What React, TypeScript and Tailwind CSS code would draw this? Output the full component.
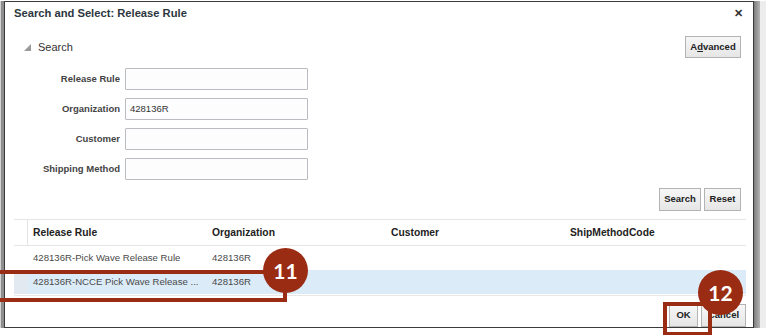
import React from "react";

const F = { fontFamily: '"Liberation Sans", Arial, sans-serif' };

function Btn({ children, className = "" }: { children: React.ReactNode; className?: string }) {
  return (
    <div
      className={
        "flex items-center justify-center border border-[#b3b3b3] bg-gradient-to-b from-[#f7f7f7] to-[#e6e6e6] text-[9.5px] font-bold text-[#222] " +
        className
      }
    >
      {children}
    </div>
  );
}

function Row({ label, value }: { label: string; value?: string }) {
  return (
    <div className="flex h-[22px] items-center">
      <div className="w-[115px] pr-[0px] text-right text-[9.5px] font-bold text-[#444]">{label}</div>
      <div className="ml-[5px] flex h-[22px] w-[183px] items-center rounded-[1px] border border-[#b9bdc2] bg-[#fdfdfe] pl-[4px] text-[9.5px] text-[#333]">
        {value}
      </div>
    </div>
  );
}

export default function App() {
  const cols = ["Release Rule", "Organization", "Customer", "ShipMethodCode"];
  return (
    <div className="relative h-[335px] w-[766px] overflow-hidden bg-white" style={F}>
      <div className="flex pt-[1px]">
        <div className="h-[327px] w-[1px] bg-[#d4d4d4]" />
        <div className="h-[327px] w-[3px] bg-[#8e8e8e]" />
        <div className="flex h-[327px] w-[750px] flex-col overflow-hidden border border-[#3a3a3a] bg-white">
          {/* title */}
          <div className="flex h-[24px] items-center justify-between pl-[9px] pr-[10px]">
            <div className="text-[11.2px] font-bold text-[#2c3640]">Search and Select: Release Rule</div>
            <div className="text-[11px] font-bold leading-none text-[#333]">✕</div>
          </div>
          {/* search header */}
          <div className="mt-[11px] flex h-[22px] items-center justify-between pl-[19px] pr-[12px]">
            <div className="flex items-center">
              <svg width="7" height="7" viewBox="0 0 7 7" className="mt-[1px]">
                <polygon points="7,0 7,7 0,7" fill="#9a9a9a" />
              </svg>
              <span className="ml-[7px] text-[11px] text-[#333]">Search</span>
            </div>
            <Btn className="h-[22px] w-[56px]">
              <span>
                A<span className="underline">d</span>vanced
              </span>
            </Btn>
          </div>
          {/* form */}
          <div className="mt-[10px] flex flex-col gap-[8px]">
            <Row label="Release Rule" />
            <Row label="Organization" value="428136R" />
            <Row label="Customer" />
            <Row label="Shipping Method" />
          </div>
          <div className="mt-[8px] flex justify-end gap-[3px] pr-[12px]">
            <Btn className="h-[23px] w-[42px]">Search</Btn>
            <Btn className="h-[23px] w-[37px]">Reset</Btn>
          </div>
          {/* table */}
          <div className="ml-[9px] mr-[7px] mt-[8px]">
            <div className="flex h-[27px] border-y border-[#e6e6e6]">
              <div className="w-[14px] border-r border-[#e3e3e3]" />
              {cols.map((c) => (
                <div key={c} className="flex w-[179px] items-center pl-[5px] text-[10.3px] font-bold text-[#222]">
                  {c}
                </div>
              ))}
            </div>
            <div className="flex h-[24px]">
              <div className="w-[14px]" />
              <div className="flex w-[179px] items-center pl-[5px] text-[9.6px] text-[#4a4a4a]">428136R-Pick Wave Release Rule</div>
              <div className="flex w-[179px] items-center pl-[5px] text-[9.6px] text-[#4a4a4a]">428136R</div>
            </div>
            <div className="flex h-[24px] bg-[#dcebf8]">
              <div className="w-[14px] bg-[#e2e9f1]" />
              <div className="flex w-[179px] items-center pl-[5px] text-[9.6px] text-[#4a4a4a]">428136R-NCCE Pick Wave Release ...</div>
              <div className="flex w-[179px] items-center pl-[5px] text-[9.6px] text-[#4a4a4a]">428136R</div>
            </div>
            <div className="mt-[1px] h-[1px] bg-[#e8e8e8]" />
          </div>
          <div className="mt-[8px] flex justify-end gap-[3px] pr-[7px]">
            <Btn className="h-[23px] w-[29px]">OK</Btn>
            <Btn className="h-[23px] w-[45px]">Cancel</Btn>
          </div>
        </div>
        <div className="h-[327px] w-[6px] bg-gradient-to-r from-[#7e7e7e] to-[#b4b4b4]" />
        <div className="h-[327px] w-[6px] bg-[#ededed]" />
      </div>

      {/* annotation 11 */}
      <div className="absolute left-[-4px] top-[270px] h-[32px] w-[291px] border-[4px] border-[#9b2c14]" />
      <div className="absolute left-[263px] top-[248px] flex h-[45px] w-[45px] items-center justify-center rounded-full bg-[#9b2c14] text-[21px] font-bold text-white" style={{ fontFamily: 'Lato, "Open Sans", sans-serif' }}>
        11
      </div>
      {/* annotation 12 */}
      <div className="absolute left-[663px] top-[302px] h-[34px] w-[49px] border-[4px] border-[#9b2c14]" />
      <div className="absolute left-[698px] top-[270px] flex h-[45px] w-[45px] items-center justify-center rounded-full bg-[#9b2c14] text-[21px] font-bold text-white" style={{ fontFamily: 'Lato, "Open Sans", sans-serif' }}>
        12
      </div>
    </div>
  );
}
